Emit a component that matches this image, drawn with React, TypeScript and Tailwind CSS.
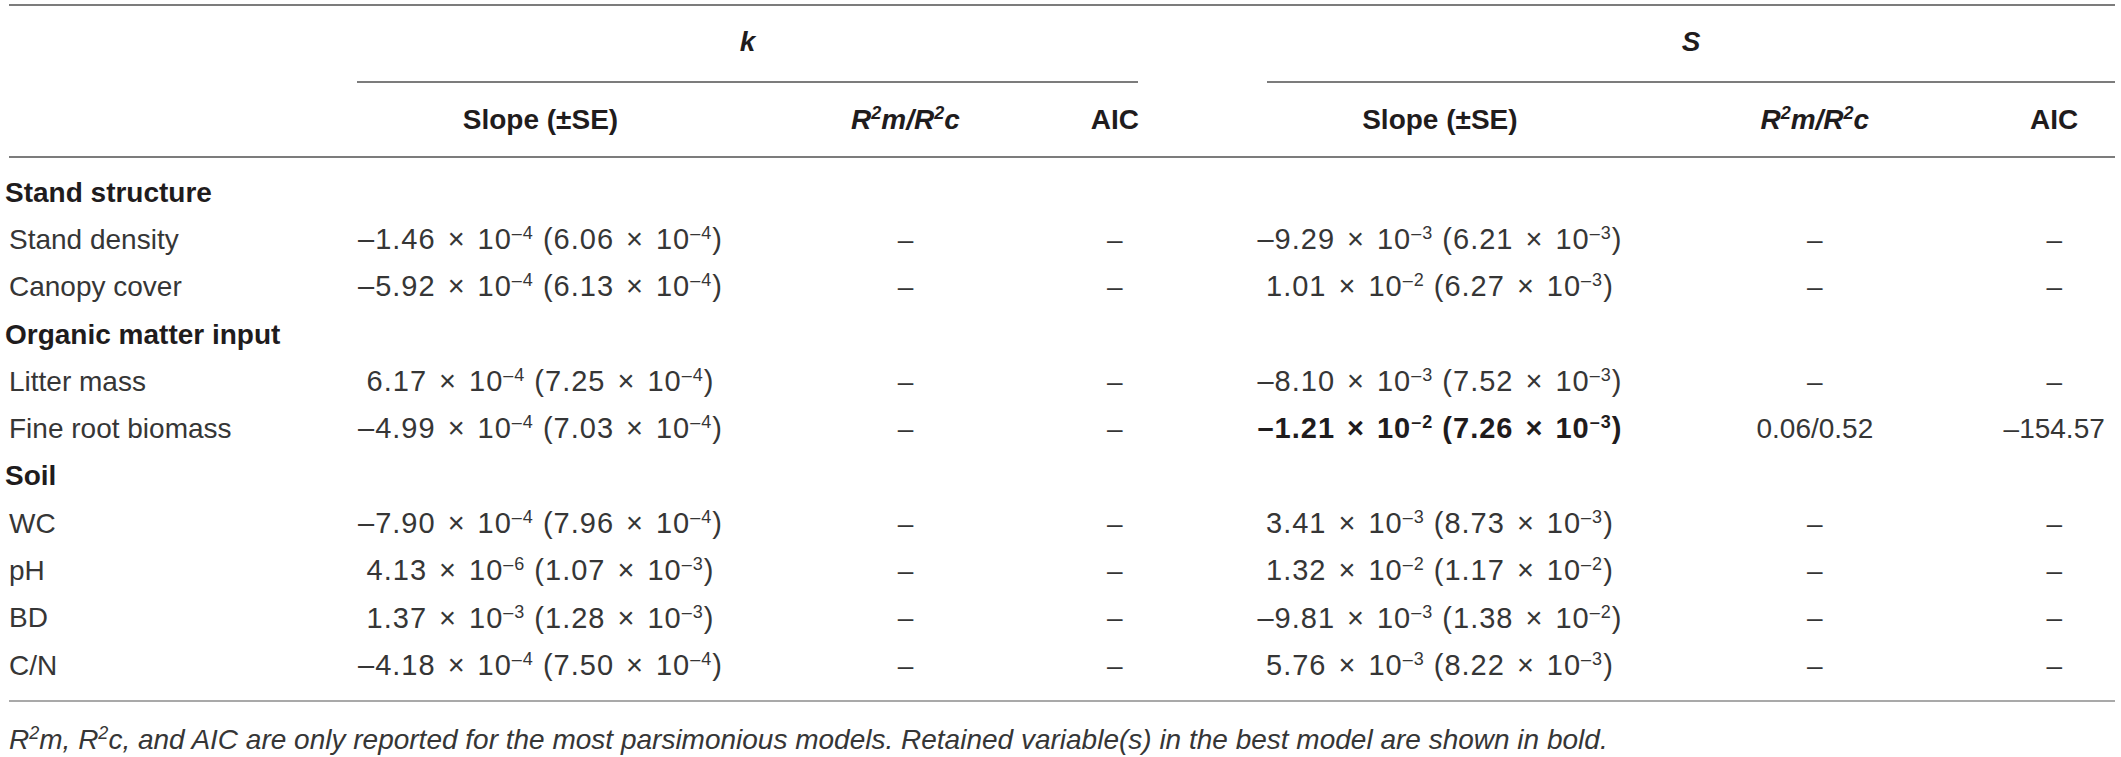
import React from "react";

type Num = { v: string; e: string };

const Sup = ({ children }: { children: React.ReactNode }) => (
  <sup className="relative -top-[10px] text-[18px] leading-none">{children}</sup>
);

const Sci = ({ a, b, bold }: { a: Num; b: Num; bold?: boolean }) => (
  <span className={bold ? "text-[29px] tracking-[1px] font-bold text-[#1f1c1d]" : "text-[29px] tracking-[1px]"}>
    {a.v}
    <span className="mx-[12px]">×</span>10<Sup>{a.e}</Sup> ({b.v}
    <span className="mx-[12px]">×</span>10<Sup>{b.e}</Sup>)
  </span>
);

type Row = {
  label: string;
  k?: [Num, Num];
  s?: [Num, Num];
  bold?: boolean;
  r2?: string;
  aic?: string;
  section?: boolean;
};

const n = (v: string, e: string): Num => ({ v, e });

const rows: Row[] = [
  { label: "Stand structure", section: true },
  { label: "Stand density", k: [n("–1.46", "–4"), n("6.06", "–4")], s: [n("–9.29", "–3"), n("6.21", "–3")] },
  { label: "Canopy cover", k: [n("–5.92", "–4"), n("6.13", "–4")], s: [n("1.01", "–2"), n("6.27", "–3")] },
  { label: "Organic matter input", section: true },
  { label: "Litter mass", k: [n("6.17", "–4"), n("7.25", "–4")], s: [n("–8.10", "–3"), n("7.52", "–3")] },
  {
    label: "Fine root biomass",
    k: [n("–4.99", "–4"), n("7.03", "–4")],
    s: [n("–1.21", "–2"), n("7.26", "–3")],
    bold: true,
    r2: "0.06/0.52",
    aic: "–154.57",
  },
  { label: "Soil", section: true },
  { label: "WC", k: [n("–7.90", "–4"), n("7.96", "–4")], s: [n("3.41", "–3"), n("8.73", "–3")] },
  { label: "pH", k: [n("4.13", "–6"), n("1.07", "–3")], s: [n("1.32", "–2"), n("1.17", "–2")] },
  { label: "BD", k: [n("1.37", "–3"), n("1.28", "–3")], s: [n("–9.81", "–3"), n("1.38", "–2")] },
  { label: "C/N", k: [n("–4.18", "–4"), n("7.50", "–4")], s: [n("5.76", "–3"), n("8.22", "–3")] },
];

const R2Head = () => (
  <span className="font-bold italic">
    R<Sup>2</Sup>m/R<Sup>2</Sup>c
  </span>
);

export default function App() {
  return (
    <div className="bg-white w-[2121px] h-[757px] overflow-hidden text-[28px] text-[#363636] font-['Liberation_Sans',Arial,sans-serif]">
      {/* top rule */}
      <div className="pt-[4px]">
        <div className="ml-[9px] w-[2106px] h-[2px] bg-[#7c7c7c]" />
      </div>

      {/* group headers k / S */}
      <div className="flex">
        <div className="w-[357px]" />
        <div className="w-[781px] h-[77px] flex items-center justify-center border-b-2 border-[#7c7c7c] pb-[3px] font-bold italic text-[#1f1c1d]">
          k
        </div>
        <div className="w-[129px]" />
        <div className="w-[848px] h-[77px] flex items-center justify-center border-b-2 border-[#7c7c7c] pb-[3px] font-bold italic text-[#1f1c1d]">
          S
        </div>
      </div>

      {/* column headers */}
      <div className="ml-[9px] w-[2106px] border-b-2 border-[#7c7c7c]">
        <div className="-ml-[9px] flex h-[73px] items-center font-bold text-[#1f1c1d]">
          <div className="w-[357px]" />
          <div className="w-[370px] text-center">Slope (±SE)</div>
          <div className="w-[362px] text-center">
            <R2Head />
          </div>
          <div className="w-[58px] text-center">AIC</div>
          <div className="w-[594px] text-center">Slope (±SE)</div>
          <div className="w-[158px] text-center whitespace-nowrap">
            <R2Head />
          </div>
          <div className="w-[100px]" />
          <div className="w-[122px] text-center">AIC</div>
        </div>
      </div>

      {/* body */}
      <div className="ml-[9px] w-[2106px] pt-[11px] pb-[11px] border-b-2 border-[#a9a9a9]">
        {rows.map((r) => (
          <div key={r.label} className="-ml-[9px] flex h-[47.3px] items-center whitespace-nowrap">
            {r.section ? (
              <div className="pl-[5px] font-bold text-[#1f1c1d]">{r.label}</div>
            ) : (
              <>
                <div className="w-[357px] pl-[9px]">{r.label}</div>
                <div className="w-[370px] text-center">{r.k && <Sci a={r.k[0]} b={r.k[1]} />}</div>
                <div className="w-[362px] text-center">–</div>
                <div className="w-[58px] text-center">–</div>
                <div className="w-[594px] text-center">{r.s && <Sci a={r.s[0]} b={r.s[1]} bold={r.bold} />}</div>
                <div className="w-[158px] text-center">{r.r2 ?? "–"}</div>
                <div className="w-[100px]" />
                <div className="w-[122px] text-center">{r.aic ?? "–"}</div>
              </>
            )}
          </div>
        ))}
      </div>

      {/* footnote */}
      <div className="pl-[9px] pt-[17px] italic whitespace-nowrap">
        R<Sup>2</Sup>m, R<Sup>2</Sup>c, and AIC are only reported for the most parsimonious models. Retained variable(s) in
        the best model are shown in bold.
      </div>
    </div>
  );
}
